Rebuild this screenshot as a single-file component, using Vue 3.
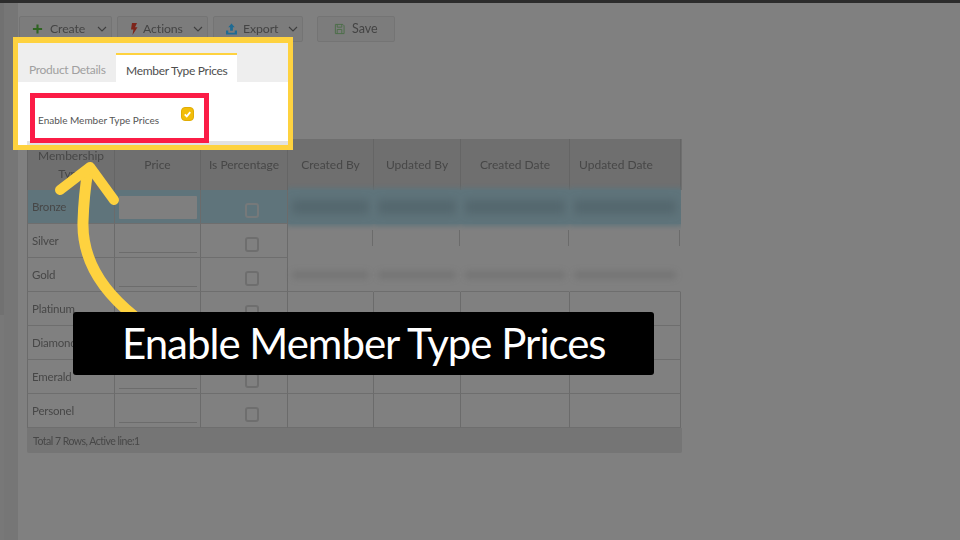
<script setup>
const toolbar = [
  { label: 'Create', icon: 'plus', width: 93 },
  { label: 'Actions', icon: 'bolt', width: 91 },
  { label: 'Export', icon: 'upload', width: 90 }
]
const headers = ['Membership Type', 'Price', 'Is Percentage', 'Created By', 'Updated By', 'Created Date', 'Updated Date']
const rows = [
  { name: 'Bronze', active: true, filled: true },
  { name: 'Silver', gap: true },
  { name: 'Gold', filled: true },
  { name: 'Platinum' },
  { name: 'Diamond' },
  { name: 'Emerald' },
  { name: 'Personel' }
]
</script>

<template>
  <div class="page">
    <div class="topbar"></div>
    <div class="body">
      <div class="rail"><div class="rail-top"></div></div>
      <div class="strip"></div>
      <main class="main">
        <div class="toolbar">
          <button v-for="b in toolbar" :key="b.label" class="tool" :class="'t-' + b.icon" :style="{ width: b.width + 'px' }">
            <svg v-if="b.icon === 'plus'" class="ico" viewBox="0 0 12 12"><path d="M6 1v10M1 6h10" stroke="#2f6422" stroke-width="2.300" fill="none"/></svg>
            <svg v-else-if="b.icon === 'bolt'" class="ico" viewBox="0 0 8 12"><path d="M2 0h5L5 4.200h2.500L2.500 12 3.400 6.500H1z" fill="#7d241a"/></svg>
            <svg v-else class="ico" viewBox="0 0 12 12"><path d="M6 0l3.500 4H7.500v4h-3V4H2.500z M0 7.500h2.500V10h7V7.500H12V12H0z" fill="#1f6b93"/></svg>
            <span class="tool-label">{{ b.label }}</span>
            <svg class="chev" viewBox="0 0 10 6"><path d="M1 1l4 4 4-4" stroke="#3f3f3f" stroke-width="1.100" fill="none"/></svg>
          </button>
          <button class="tool save">
            <svg class="ico" viewBox="0 0 12 12"><path d="M1.500 1h8l1.500 1.500V11h-9.500z M3.500 1v3h5V1 M3.500 11V6.500h5V11" stroke="#4a6d46" stroke-width="1" fill="none"/></svg>
            <span class="tool-label">Save</span>
          </button>
        </div>

        <section class="grid">
          <div class="row head">
            <div v-for="h in headers" :key="h" class="cell">{{ h }}</div>
          </div>
          <div v-for="r in rows" :key="r.name" class="row" :class="{ active: r.active, filled: r.filled, gap: r.gap }">
            <div class="cell name">{{ r.name }}</div>
            <div class="cell price"><span class="input" :class="{ focus: r.active }"></span></div>
            <div class="cell check"><span class="box"></span></div>
            <div v-for="n in 4" :key="n" class="cell data">
              <span v-if="r.filled" class="smear"></span>
            </div>
          </div>
          <div class="foot">Total 7 Rows, Active line:1</div>
        </section>
      </main>
    </div>

    <div class="popup">
      <div class="tabs">
        <div class="tab">Product Details</div>
        <div class="tab on">Member Type Prices</div>
      </div>
      <div class="panel">
        <div class="focus-box">
          <span class="focus-label">Enable Member Type Prices</span>
          <span class="yes">
            <svg viewBox="0 0 12 12"><path d="M3 6.300l2.200 2.200L9 4" stroke="#fff" stroke-width="2" fill="none"/></svg>
          </span>
        </div>
      </div>
      <div class="panel-edge"></div>
    </div>

    <svg class="arrow" viewBox="0 0 960 540">
      <path d="M134 316C104 292 82 262 83 222 83.500 204 85 188 88 170" stroke="#fed23f" stroke-width="11" fill="none"/>
      <path d="M60 190L90 167 114 200" stroke="#fed23f" stroke-width="10" stroke-linecap="round" stroke-linejoin="round" fill="none"/>
    </svg>

    <div class="caption">Enable Member Type Prices</div>
  </div>
</template>

<style>
html, body { margin: 0; background: #808080; }
</style>

<style scoped>
.page {
  position: relative;
  width: 960px;
  height: 540px;
  overflow: hidden;
  background: #808080;
  font-family: Lato, "Open Sans", sans-serif;
}
.topbar { height: 3px; background: #2c2c2c; }
.body { display: flex; height: 537px; filter: blur(0.6px); }
.rail { width: 4px; background: #787878; }
.rail-top { height: 312px; background: #717171; }
.strip { width: 14px; background: #767676; }
.main { flex: 1; padding: 13px 0 0 1px; }
.toolbar { display: flex; height: 26px; gap: 5px; }
.tool {
  display: flex;
  align-items: center;
  box-sizing: border-box;
  height: 26px;
  padding: 0 4px 1px 12px;
  border: 1px solid #747474;
  border-radius: 2px;
  background: #7c7c7c;
  font: 12.300px Lato, sans-serif;
  letter-spacing: -0.1px;
  color: #444;
}
.ico { width: 11px; height: 12px; flex: none; }
.t-bolt .ico { width: 8px; }
.tool-label { margin-left: 7px; flex: 1; text-align: left; white-space: nowrap; }
.t-bolt .tool-label { margin-left: 5px; }
.t-upload .tool-label { margin-left: 6px; }
.chev { width: 10px; height: 6px; flex: none; }
.save { width: 78px; margin-left: 9px; padding-left: 16px; font-size: 12.500px; letter-spacing: 0; }

.grid {
  width: 655px;
  margin: 97px 0 0 8px;
  background: #808080;
  border-radius: 2px;
}
.row {
  display: grid;
  grid-template-columns: 88px 86px 87px 86px 87px 109px 111px;
  height: 34px;
  margin-right: 1px;
}
.row.head {
  height: 51px;
  background: #6f6f6f;
  margin-right: 0;
}
.row.active { background: #5f747b; }
.cell {
  display: flex;
  align-items: center;
  box-sizing: border-box;
  border-right: 1px solid #6b6b6b;
  border-bottom: 1px solid #6e6e6e;
  font-size: 11.500px;
  letter-spacing: -0.2px;
  color: #474747;
  min-width: 0;
}
.cell:first-child { border-left: 1px solid #6b6b6b; }
.head .cell {
  justify-content: center;
  text-align: center;
  font-size: 12px;
  letter-spacing: 0;
  line-height: 18px;
  padding: 0 4px;
  border-color: #656565;
  border-bottom: 0;
}
.head .cell:last-child { padding-right: 22px; }
.name { padding-left: 4px; }
.price { padding: 6px 3px 4px 4px; }
.input { display: block; width: 100%; height: 100%; box-sizing: border-box; border-bottom: 1px solid #6c6c6c; }
.input.focus { background: #7f7f7f; border: 0; border-radius: 1px; }
.check { justify-content: center; padding: 7px 0 0 16px; }
.box { box-sizing: border-box; width: 14px; height: 15px; border: 2px solid #6e6e6e; border-radius: 3px; }
.active .box { border-color: #76797a; }
.data { padding: 0 4px; }
.filled .data { border-right-color: transparent; }
.active .data { border-color: transparent; box-shadow: 0 0 5px 2px #5f747b; clip-path: inset(-7px 0 -7px 0); }
.gap .data {
  border-color: transparent;
  background: linear-gradient(#6b6b6b, #6b6b6b) right 6px / 1px 16px no-repeat;
}
.smear {
  display: block;
  width: 100%;
  height: 8px;
  border-radius: 3px;
  background: rgba(70, 70, 70, 0.2);
  filter: blur(3px);
}
.active .smear { height: 14px; background: rgba(60, 74, 78, 0.3); filter: blur(4px); }
.foot {
  height: 25px;
  padding-left: 6px;
  display: flex;
  align-items: center;
  font-size: 10.500px;
  letter-spacing: -0.5px;
  color: #474747;
  background: #757575;
  border-radius: 0 0 2px 2px;
}

.popup {
  position: absolute;
  left: 13px;
  top: 37px;
  width: 280px;
  height: 113px;
  box-sizing: border-box;
  border: 5px solid #fed23f;
  border-top-width: 6px;
  background: #fff;
  display: flex;
  flex-direction: column;
}
.tabs { display: flex; height: 39px; background: #eee; flex: none; }
.tab {
  box-sizing: border-box;
  display: flex;
  align-items: center;
  padding: 13px 0 0 11px;
  width: 98px;
  white-space: nowrap;
  font-size: 12px;
  letter-spacing: -0.3px;
  color: #a0a0a0;
}
.tab.on {
  width: 121px;
  margin-top: 10px;
  padding: 4px 0 0 10px;
  background: #fff;
  border-top: 2px solid #fed23f;
  color: #4e4e4e;
}
.panel { flex: 1; padding: 11px 0 0 12px; min-height: 0; }
.focus-box {
  box-sizing: border-box;
  width: 179px;
  height: 50px;
  border: 5px solid #fb1c46;
  background: #fff;
  position: relative;
  z-index: 1;
  font-size: 10px;
  color: #555;
}
.focus-label { position: absolute; left: 3px; top: 16px; white-space: nowrap; }
.yes {
  position: absolute;
  left: 146px;
  top: 9px;
  display: block;
  box-sizing: border-box;
  width: 13px;
  height: 14px;
  background: #f2bd09;
  border: 1px solid #e0ac05;
  border-radius: 4px;
}
.yes svg { display: block; width: 11px; height: 12px; }
.panel-edge {
  position: absolute;
  left: 9px;
  right: 0;
  bottom: 0;
  height: 4px;
  background: #e2e2e2;
}
.arrow { position: absolute; left: 0; top: 0; width: 960px; height: 540px; pointer-events: none; }
.caption {
  position: absolute;
  left: 73px;
  top: 312px;
  width: 581px;
  height: 63px;
  box-sizing: border-box;
  padding-left: 49px;
  background: #000;
  border-radius: 3px;
  color: #fff;
  font-size: 42px;
  letter-spacing: -1px;
  line-height: 63px;
  white-space: nowrap;
}
</style>
